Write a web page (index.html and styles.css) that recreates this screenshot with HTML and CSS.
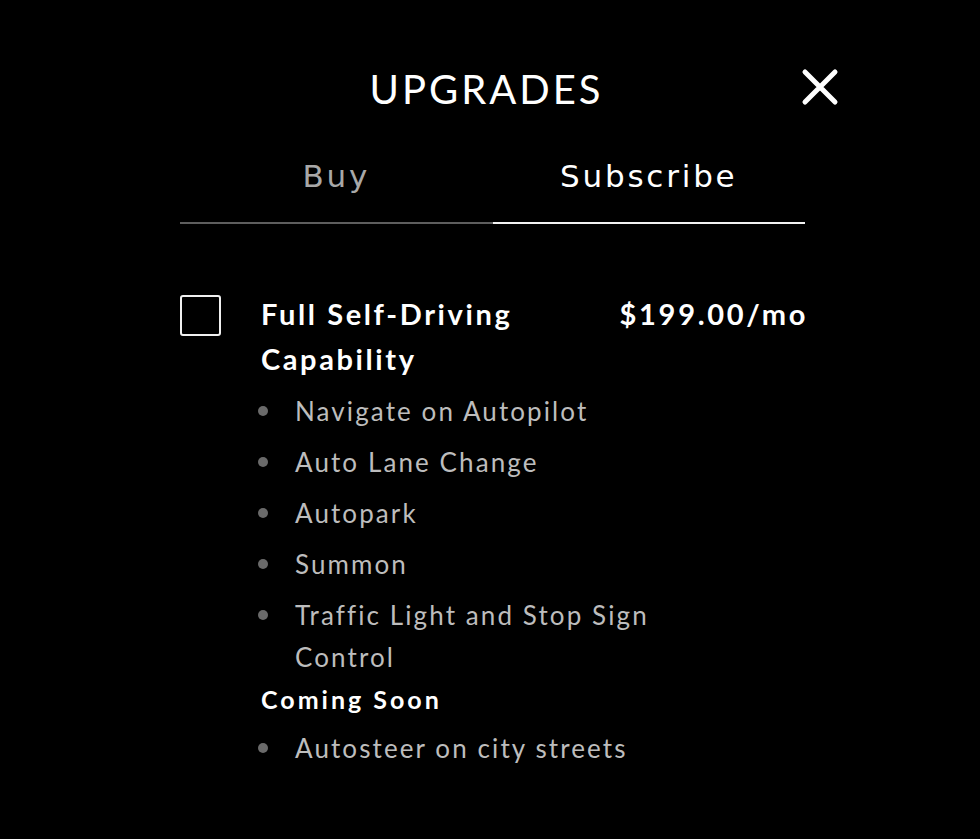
FILE: index.html
```html
<!DOCTYPE html>
<html>
<head>
<meta charset="utf-8">
<link rel="stylesheet" href="styles.css">
</head>
<body>
<div class="panel">
  <header class="head">
    <h1 class="title">UPGRADES</h1>
    <button class="close" aria-label="Close">
      <svg width="38" height="38" viewBox="0 0 38 38"><path d="M4 4 L34 34 M34 4 L4 34" stroke="#fff" stroke-width="5" stroke-linecap="round"/></svg>
    </button>
  </header>
  <nav class="tabs">
    <div class="tab">Buy</div>
    <div class="tab active">Subscribe</div>
  </nav>
  <section class="item">
    <div class="check"></div>
    <div class="body">
      <div class="row">
        <div class="name">Full Self-Driving<br>Capability</div>
        <div class="price">$199.00/mo</div>
      </div>
      <ul class="features">
        <li>Navigate on Autopilot</li>
        <li>Auto Lane Change</li>
        <li>Autopark</li>
        <li>Summon</li>
        <li>Traffic Light and Stop Sign<br>Control</li>
      </ul>
      <div class="soon">Coming Soon</div>
      <ul class="features">
        <li class="last">Autosteer on city streets</li>
      </ul>
    </div>
  </section>
</div>
</body>
</html>
```
FILE: styles.css
```css
html, body { margin: 0; padding: 0; background: #000; }
body { width: 980px; height: 839px; overflow: hidden; font-family: Lato, "Open Sans", sans-serif; color: #fff; }
.panel { margin-left: 180px; width: 625px; padding-top: 62px; }
.head { position: relative; height: 54px; display: flex; justify-content: center; align-items: center; }
.title { margin: 0; font-size: 40px; font-weight: 400; letter-spacing: 3px; line-height: 54px; padding-right: 12px; }
.close { position: absolute; right: -34px; top: 6px; background: none; border: 0; padding: 0; width: 38px; height: 38px; }
.tabs { display: flex; margin-top: 36px; }
.tab { flex: 1; text-align: center; font-family: "DejaVu Sans", sans-serif; font-size: 31px; color: #a8a8a8; height: 70px; line-height: 48px; border-bottom: 2px solid #5e5e5e; letter-spacing: 2.8px; }
.tab.active { color: #fff; border-bottom-color: #f2f2f2; }
.item { display: flex; margin-top: 72px; }
.check { width: 37px; height: 37px; border: 2px solid #f0f0f0; border-radius: 3px; flex: none; margin-top: -1px; }
.body { margin-left: 40px; flex: 1; }
.row { display: flex; justify-content: space-between; }
.name { font-size: 29px; font-weight: 700; line-height: 45px; margin-top: -5px; letter-spacing: 2.6px; }
.price { font-size: 29px; font-weight: 700; line-height: 45px; margin-top: -5px; letter-spacing: 2.7px; margin-right: -3px; }
.features { list-style: none; margin: 0; padding: 0; }
.features li { position: relative; padding-left: 34px; font-size: 26px; color: #bdbdbd; line-height: 42px; margin-top: 9px; letter-spacing: 2.1px; }
.features li.last { margin-top: 7px; }
.features li::before { content: ""; position: absolute; left: -3px; top: 16px; width: 10px; height: 10px; border-radius: 50%; background: #6a6a6a; }
.soon { font-size: 25px; font-weight: 700; line-height: 42px; margin-top: 0; letter-spacing: 3px; }
```
